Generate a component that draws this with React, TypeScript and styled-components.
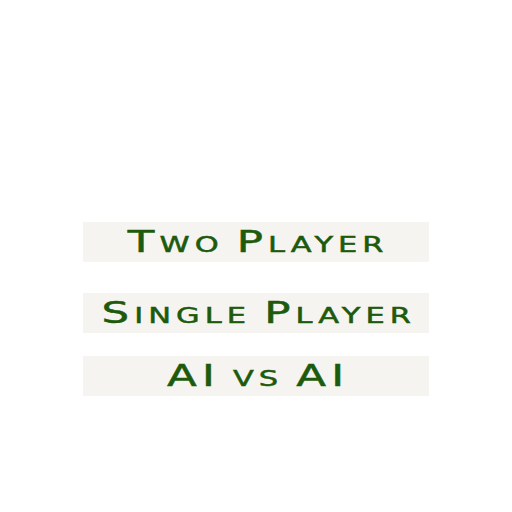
import * as React from "react";
import styled, { createGlobalStyle } from "styled-components";

const FOND = "#ffffff";
const BOUTON = "#f5f4f1";
const TEXTE = "#1d5a0c";
const ESPACE = 3.5;

const Global = createGlobalStyle`
  html, body {
    margin: 0;
    padding: 0;
    background: ${FOND};
  }
`;

const Ecran = styled.div`
  width: 512px;
  height: 512px;
  display: flex;
  flex-direction: column;
  align-items: center;
  padding-top: 222px;
  box-sizing: border-box;
`;

const BoutonMenu = styled.button<{ $avant: number }>`
  width: 346px;
  height: 40px;
  margin-top: ${(p) => p.$avant}px;
  padding: 0;
  border: none;
  background: ${BOUTON};
  display: flex;
  justify-content: center;
  align-items: center;
  cursor: pointer;
`;

/* lettres larges façon Copperplate : police étirée horizontalement */
const Libelle = styled.span`
  display: inline-block;
  padding-left: ${ESPACE}px;
  color: ${TEXTE};
  font-family: "DejaVu Sans", sans-serif;
  font-weight: normal;
  font-variant: small-caps;
  font-size: 30px;
  line-height: 1;
  letter-spacing: ${ESPACE}px;
  word-spacing: -4px;
  -webkit-text-stroke: 0.5px ${TEXTE};
  white-space: nowrap;
  transform: scaleX(1.45);
`;

const choix = [
  { nom: "Two Player", avant: 0 },
  { nom: "Single Player", avant: 31 },
  { nom: "AI vs AI", avant: 23 },
];

export default function App() {
  return (
    <>
      <Global />
      <Ecran>
        {choix.map((c) => (
          <BoutonMenu key={c.nom} $avant={c.avant}>
            <Libelle>{c.nom}</Libelle>
          </BoutonMenu>
        ))}
      </Ecran>
    </>
  );
}
